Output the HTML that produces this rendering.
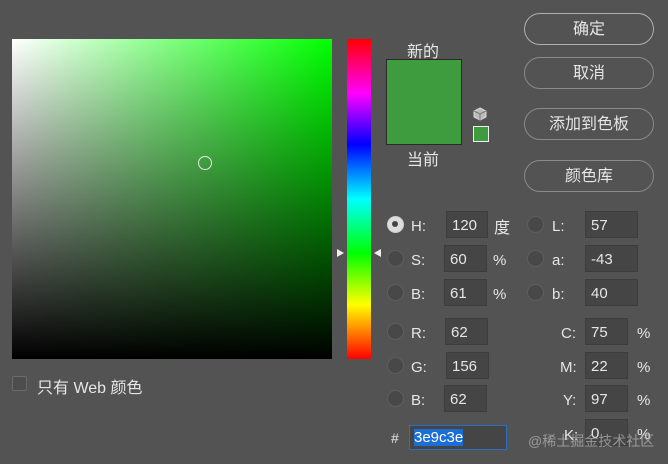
<!DOCTYPE html><html><head><meta charset="utf-8"><style>
*{margin:0;padding:0;box-sizing:border-box}
body{width:668px;height:464px;background:#535353;position:relative;overflow:hidden;font-family:"Liberation Sans","Noto Sans CJK SC",sans-serif;color:#e6e6e6;font-size:15px}
.a{position:absolute}
.field{left:12px;top:39px;width:320px;height:320px;background:linear-gradient(to bottom,rgba(0,0,0,0),#000),linear-gradient(to right,#fff,#00ff00)}
.hue{left:347px;top:39px;width:24px;height:320px;background:linear-gradient(to bottom,#f00 0%,#f0f 17%,#00f 33%,#0ff 50%,#0f0 67%,#ff0 83%,#f00 100%)}
.btn{left:524px;width:130px;height:32px;border:1.5px solid #8a8a8a;border-radius:16px;text-align:center;line-height:31px;font-size:16px}
.inp{background:#454545;border:1px solid #3d3d3d;height:27px;line-height:27px;padding-left:5px;font-size:15px}
.rad{width:17px;height:17px;border-radius:50%;border:1.5px solid #5e5e5e;background:#484848}
.lbl{font-size:15px;margin-top:2px}
</style></head><body>
<div class="a field"></div>
<div class="a" style="left:198px;top:156px;width:14px;height:14px;border:1px solid #e8e8e8;border-radius:50%"></div>
<div class="a hue"></div>
<div class="a" style="left:337px;top:249px;width:0;height:0;border-top:4px solid transparent;border-bottom:4px solid transparent;border-left:7px solid #eee"></div>
<div class="a" style="left:374px;top:249px;width:0;height:0;border-top:4px solid transparent;border-bottom:4px solid transparent;border-right:7px solid #eee"></div>
<div class="a" style="left:12px;top:376px;width:15px;height:15px;border:1.5px solid #6a6a6a;border-radius:2px;background:#4d4d4d"></div>
<div class="a" style="left:37px;top:374px;font-size:16px">只有 Web 颜色</div>

<div class="a" style="left:407px;top:38px;font-size:16px">新的</div>
<div class="a" style="left:386px;top:59px;width:76px;height:86px;background:#3e9c3e;border:1px solid #2a2a2a"></div>
<div class="a" style="left:407px;top:146px;font-size:16px">当前</div>
<svg class="a" style="left:473px;top:107px" width="14" height="14" viewBox="0 0 14 14"><path d="M7 1L13 4V10L7 13L1 10V4Z" fill="#bbb" stroke="#ddd"/><path d="M1 4L7 7L13 4M7 7V13" stroke="#777" fill="none"/></svg>
<div class="a" style="left:473px;top:126px;width:16px;height:16px;background:#3e9c3e;border:1.5px solid #eee"></div>

<div class="a btn" style="top:13px;border-color:#b0b0b0">确定</div>
<div class="a btn" style="top:57px">取消</div>
<div class="a btn" style="top:108px">添加到色板</div>
<div class="a btn" style="top:160px">颜色库</div>

<div class="a rad" style="left:387px;top:216px;background:#ddd;border-color:#ccc"><div style="width:6px;height:6px;border-radius:50%;background:#444;margin:4px"></div></div>
<div class="a lbl" style="left:411px;top:216px">H:</div>
<div class="a inp" style="left:446px;top:211px;width:42px">120</div>
<div class="a" style="left:494px;top:214px;font-size:16px">度</div>
<div class="a rad" style="left:527px;top:216px"></div><div class="a lbl" style="left:552px;top:216px">L:</div>
<div class="a inp" style="left:585px;top:211px;width:53px">57</div>

<div class="a rad" style="left:387px;top:250px"></div><div class="a lbl" style="left:411px;top:250px">S:</div>
<div class="a inp" style="left:444px;top:245px;width:43px">60</div><div class="a lbl" style="left:493px;top:250px">%</div>
<div class="a rad" style="left:527px;top:250px"></div><div class="a lbl" style="left:552px;top:250px">a:</div>
<div class="a inp" style="left:585px;top:245px;width:53px">-43</div>

<div class="a rad" style="left:387px;top:284px"></div><div class="a lbl" style="left:411px;top:284px">B:</div>
<div class="a inp" style="left:444px;top:279px;width:43px">61</div><div class="a lbl" style="left:493px;top:284px">%</div>
<div class="a rad" style="left:527px;top:284px"></div><div class="a lbl" style="left:552px;top:284px">b:</div>
<div class="a inp" style="left:585px;top:279px;width:53px">40</div>

<div class="a rad" style="left:387px;top:323px"></div><div class="a lbl" style="left:411px;top:323px">R:</div>
<div class="a inp" style="left:445px;top:318px;width:43px">62</div>
<div class="a rad" style="left:387px;top:357px"></div><div class="a lbl" style="left:411px;top:357px">G:</div>
<div class="a inp" style="left:446px;top:352px;width:43px">156</div>
<div class="a rad" style="left:387px;top:390px"></div><div class="a lbl" style="left:411px;top:390px">B:</div>
<div class="a inp" style="left:444px;top:385px;width:43px">62</div>

<div class="a lbl" style="left:561px;top:323px">C:</div><div class="a inp" style="left:585px;top:318px;width:43px">75</div><div class="a lbl" style="left:637px;top:323px">%</div>
<div class="a lbl" style="left:560px;top:357px">M:</div><div class="a inp" style="left:585px;top:352px;width:43px">22</div><div class="a lbl" style="left:637px;top:357px">%</div>
<div class="a lbl" style="left:563px;top:390px">Y:</div><div class="a inp" style="left:585px;top:385px;width:43px">97</div><div class="a lbl" style="left:637px;top:390px">%</div>
<div class="a lbl" style="left:564px;top:425px">K:</div><div class="a inp" style="left:585px;top:419px;width:43px">0</div><div class="a lbl" style="left:637px;top:424px">%</div>

<div class="a" style="left:391px;top:430px;font-size:14px">#</div>
<div class="a" style="left:409px;top:425px;width:98px;height:25px;border:1.5px solid #2a6fc0;background:#454545"><span style="display:inline-block;margin:3px 0 0 4px;background:#1a6fd6;color:#fff;font-size:15px;line-height:17px">3e9c3e</span></div>
<div class="a" style="left:528px;top:431px;font-size:14px;color:rgba(200,200,200,0.6)">@稀土掘金技术社区</div>
</body></html>
